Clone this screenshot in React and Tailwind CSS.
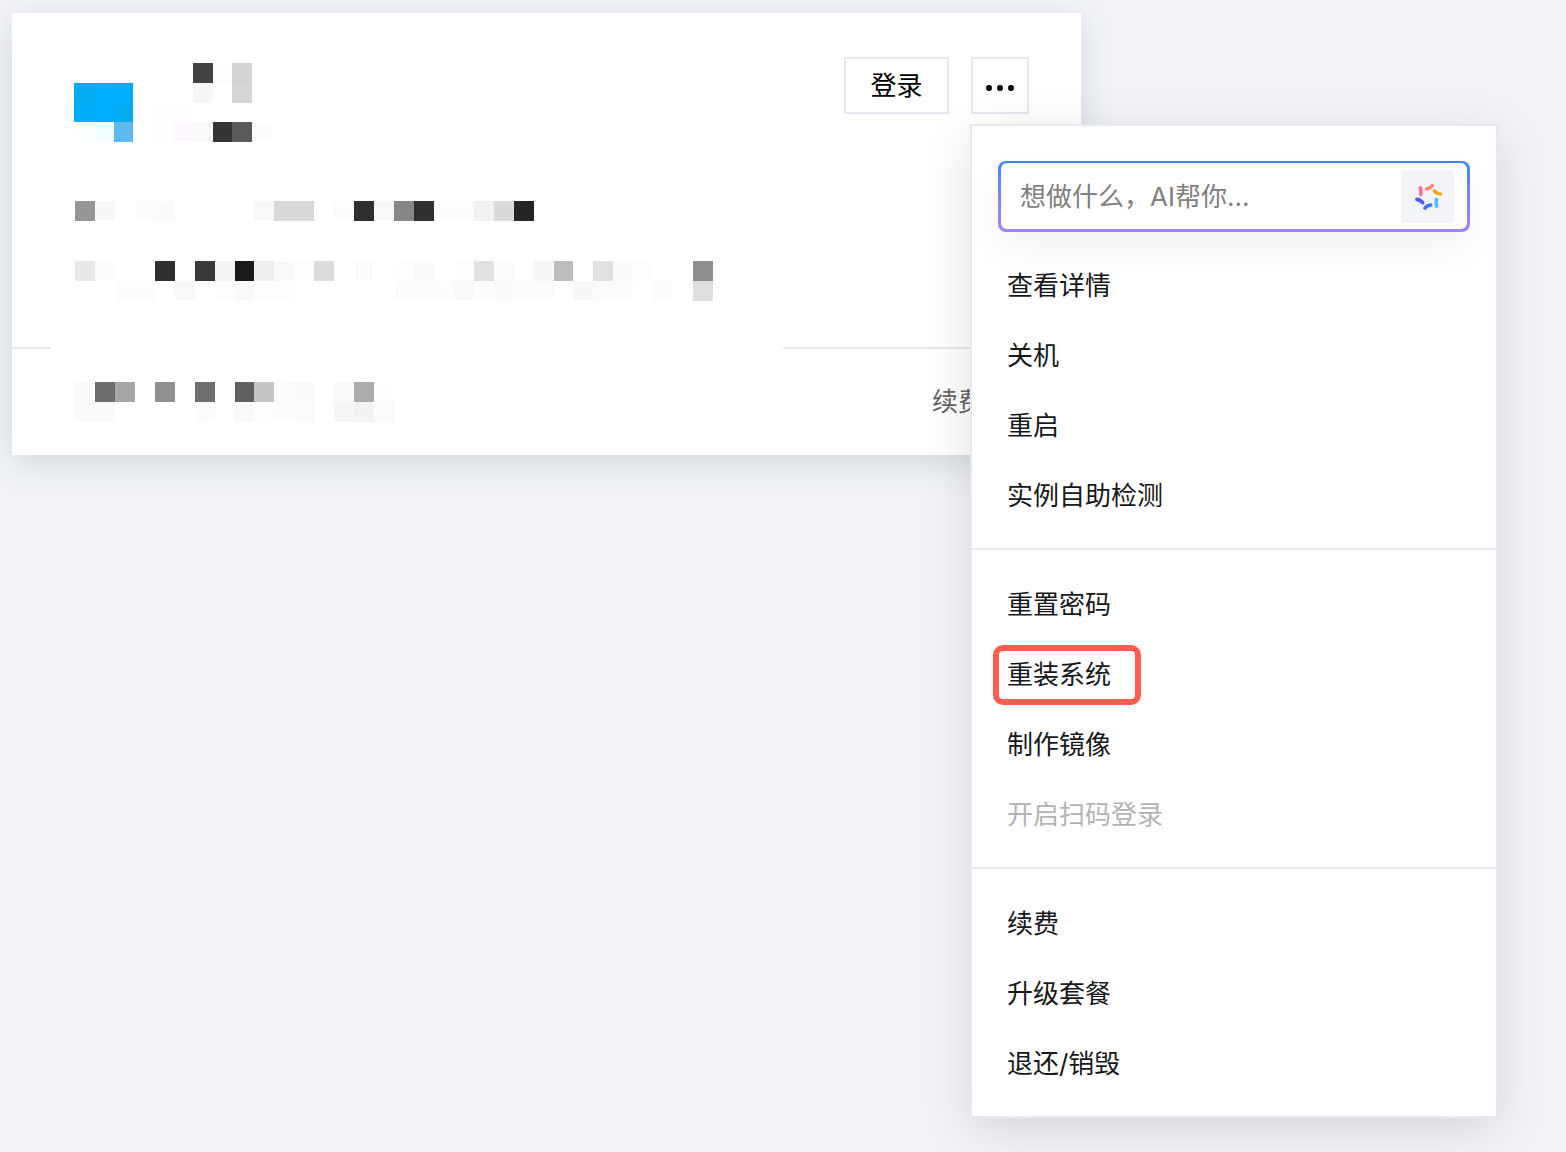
import React, { useState } from 'react';
import { clsx } from 'clsx';

// [column, row, colour] of every visible block
const headerBlocks = [
  [0, 1, '#06acf3'], [1, 1, '#00b0ff'], [2, 1, '#00aeff'],
  [0, 2, '#00aefa'], [1, 2, '#00aeff'], [2, 2, '#06adf2'],
  [0, 3, '#fcfffc'], [1, 3, '#f4ffff'], [2, 3, '#5dbaee'],
  [4, 2, '#fefefe'], [5, 2, '#fefefe'], [4, 3, '#fefefe'],
  [6, 0, '#434343'], [7, 0, '#fdfdfd'], [8, 0, '#d4d4d4'],
  [6, 1, '#f7f7f7'], [8, 1, '#d7d7d7'],
  [5, 3, '#fdf8ff'], [6, 3, '#fafafa'], [7, 3, '#343434'], [8, 3, '#5a5a5a'], [9, 3, '#fcfcfc'],
];

const detailBlocks = [
  [0, 0, '#969696'], [1, 0, '#f8f8f8'], [3, 0, '#fbfbfb'], [4, 0, '#fafafa'],
  [9, 0, '#f9f9f9'], [10, 0, '#d9d9d9'], [11, 0, '#d9d9d9'], [13, 0, '#fbfdfb'],
  [14, 0, '#2f2f2f'], [15, 0, '#f9f9f9'], [16, 0, '#878787'], [17, 0, '#303030'],
  [18, 0, '#fcfcfc'], [19, 0, '#fcfcfc'], [20, 0, '#f2f2f2'], [21, 0, '#dadada'], [22, 0, '#252525'],
  [0, 3, '#e9e9e9'], [1, 3, '#fbfbfb'], [4, 3, '#2f2f2f'], [6, 3, '#383838'],
  [7, 3, '#f4f4f4'], [8, 3, '#191919'], [9, 3, '#efefef'], [10, 3, '#f9f9f9'],
  [11, 3, '#fdfdfd'], [12, 3, '#dcdcdc'], [14, 3, '#fcfcfc'], [16, 3, '#fdfdfd'],
  [17, 3, '#fafafa'], [19, 3, '#fdfdfd'], [20, 3, '#e1e1e1'], [21, 3, '#fbfbfb'],
  [23, 3, '#f7f7f7'], [24, 3, '#bdbdbd'], [26, 3, '#e2e2e2'], [27, 3, '#fafafa'],
  [28, 3, '#fdfdfd'], [31, 3, '#8e8e8e'],
  [2, 4, '#fcfcfc'], [3, 4, '#fcfcfc'], [5, 4, '#f9f9f9'], [7, 4, '#fdfdfd'],
  [8, 4, '#f9f9f9'], [9, 4, '#fdfdfd'], [10, 4, '#fdfdfd'], [16, 4, '#fcfcfc'], [17, 4, '#fbfbfb'],
  [18, 4, '#fcfcfc'], [19, 4, '#f9f9f9'], [20, 4, '#fcfcfc'], [21, 4, '#fafafa'],
  [22, 4, '#fbfbfb'], [23, 4, '#fcfcfc'], [25, 4, '#f8f8f8'], [26, 4, '#fbfbfb'],
  [27, 4, '#fcfcfc'], [29, 4, '#fbfbfb'], [31, 4, '#dfdfdf'],
];

const footerBlocks = [
  [0, 0, '#fafafa'], [1, 0, '#6d6d6d'], [2, 0, '#a6a6a6'], [4, 0, '#919191'],
  [6, 0, '#6e6e6e'], [8, 0, '#606060'], [9, 0, '#c5c5c5'], [10, 0, '#fbfbfb'],
  [11, 0, '#fafafa'], [13, 0, '#fafafa'], [14, 0, '#acacac'], [15, 0, '#fdfdfd'],
  [0, 1, '#fafafa'], [1, 1, '#fafafa'], [6, 1, '#fbfbfb'], [8, 1, '#f9f9f9'],
  [9, 1, '#fdfdfd'], [10, 1, '#fcfcfc'], [11, 1, '#fbfbfb'], [13, 1, '#f6f6f6'],
  [14, 1, '#f3f3f3'], [15, 1, '#fbfbfb'],
];

const menuGroups = [
  [{ label: '查看详情' }, { label: '关机' }, { label: '重启' }, { label: '实例自助检测' }],
  [
    { label: '重置密码' },
    { label: '重装系统', marked: true },
    { label: '制作镜像' },
    { label: '开启扫码登录', disabled: true },
  ],
  [{ label: '续费' }, { label: '升级套餐' }, { label: '退还/销毁' }],
];

const Mosaic = ({ blocks, cols, rows, className }) => (
  <svg
    viewBox={`0 0 ${cols} ${rows}`}
    preserveAspectRatio="none"
    shapeRendering="crispEdges"
    className={className}
    aria-hidden="true"
  >
    {blocks.map(([x, y, fill]) => (
      <rect key={`${x}-${y}`} x={x} y={y} width="1" height="1" fill={fill} />
    ))}
  </svg>
);

const AiIcon = () => (
  <svg viewBox="98 214 90 90" className="size-[30px]" fill="none" strokeWidth="11" strokeLinecap="round">
    <path d="M120 235Q124 244 121 254" stroke="#ff6b9f" />
    <path d="M139 238Q150 236 156 228" stroke="#ff8672" />
    <path d="M162 244Q168 252 180 253" stroke="#f7a826" />
    <path d="M169 269Q165 278 169 289" stroke="#56bdff" />
    <path d="M134 295Q139 288 151 286" stroke="#3b72ff" />
    <path d="M110 269Q122 271 127 279" stroke="#5457ff" />
  </svg>
);

const ActionMenu = () => {
  const [query, setQuery] = useState('');

  return (
    <div className="absolute left-[-1px] top-full z-10 mt-[10px] w-[528px] border-2 border-[#e6e9ef] bg-white pt-[35px] shadow-[0_12px_48px_rgba(0,0,0,0.12)]">
      {/* AI search */}
      <div className="mx-[26px] -mb-px h-[71px] rounded-lg bg-linear-to-b from-[#3a86ff] to-[#a283ff] px-[3px] pt-[2px] pb-[3px] shadow-[0_16px_40px_rgba(0,0,0,0.05)]">
        <div className="flex h-full items-center rounded-md bg-white pr-[13px] pl-[19px]">
          <input
            type="text"
            aria-label="AI"
            value={query}
            onChange={(e) => setQuery(e.target.value)}
            placeholder="想做什么，AI帮你..."
            className="min-w-0 flex-1 bg-transparent pt-[2px] outline-none placeholder:text-[#808080]"
          />
          <button type="button" aria-label="AI" className="flex size-[53px] shrink-0 items-center justify-center rounded bg-[#f2f4f8]">
            <AiIcon />
          </button>
        </div>
      </div>

      {menuGroups.map((group, i) => (
        <ul key={i} className={clsx('pt-[19px] pb-[18px]', i > 0 && 'border-t-2 border-[#e6e9ef]')}>
          {group.map((item) => (
            <li key={item.label}>
              <button
                type="button"
                disabled={item.disabled}
                className="flex h-[70px] w-full items-center px-[35px] pt-[2px] text-left text-[#16181a] disabled:text-[#b3b3b3]"
              >
                <span className="relative">
                  {item.label}
                  {item.marked && (
                    <span className="absolute -inset-y-[11px] -right-[30px] -left-[14px] rounded-[10px] border-6 border-[#ff5b50]" />
                  )}
                </span>
              </button>
            </li>
          ))}
        </ul>
      ))}
    </div>
  );
};

const App = () => {
  const [open, setOpen] = useState(true);

  return (
    <div className="min-h-screen bg-[#f2f4f8] px-3 pt-[13px] font-[Inter,'Noto_Sans_CJK_SC',sans-serif] text-[26px] leading-[38px] text-black">
      <div className="max-w-[1069px] bg-white shadow-[0_8px_32px_rgba(54,68,90,0.16)]">
        {/* Instance info */}
        <div className="flex items-start justify-between pt-11 pr-[52px] pl-[62px]">
          <div className="pt-[6px] pb-[46px]">
            <Mosaic blocks={headerBlocks} cols={10} rows={4} className="h-[79px] w-[198px]" />
            <Mosaic blocks={detailBlocks} cols={32} rows={5} className="mt-[59px] ml-px h-[100px] w-[638px]" />
          </div>
          <div className="flex gap-[22px]">
            <button type="button" className="h-[57px] w-[105px] border-2 border-[#e6e9ef] bg-white">
              登录
            </button>
            <div className="relative">
              <button
                type="button"
                aria-label="更多"
                aria-expanded={open}
                onClick={() => setOpen(!open)}
                className="flex h-[57px] w-[58px] items-center justify-center gap-[5px] border-2 border-[#e6e9ef] bg-white pt-1"
              >
                <span className="size-[6px] rounded-full bg-black" />
                <span className="size-[6px] rounded-full bg-black" />
                <span className="size-[6px] rounded-full bg-black" />
              </button>
              {open && <ActionMenu />}
            </div>
          </div>
        </div>

        {/* Divider */}
        <div className="flex justify-between">
          <div className="h-[2px] w-[39px] bg-[#e6e9ef]" />
          <div className="h-[2px] w-[298px] bg-[#e6e9ef]" />
        </div>

        {/* Footer */}
        <div className="flex h-[106px] items-center justify-between pr-[97px] pl-[63px]">
          <Mosaic blocks={footerBlocks} cols={16} rows={2} className="h-10 w-[319px]" />
          <a href="#renew" className="text-[#666666]">续费</a>
        </div>
      </div>
    </div>
  );
};

export default App;
